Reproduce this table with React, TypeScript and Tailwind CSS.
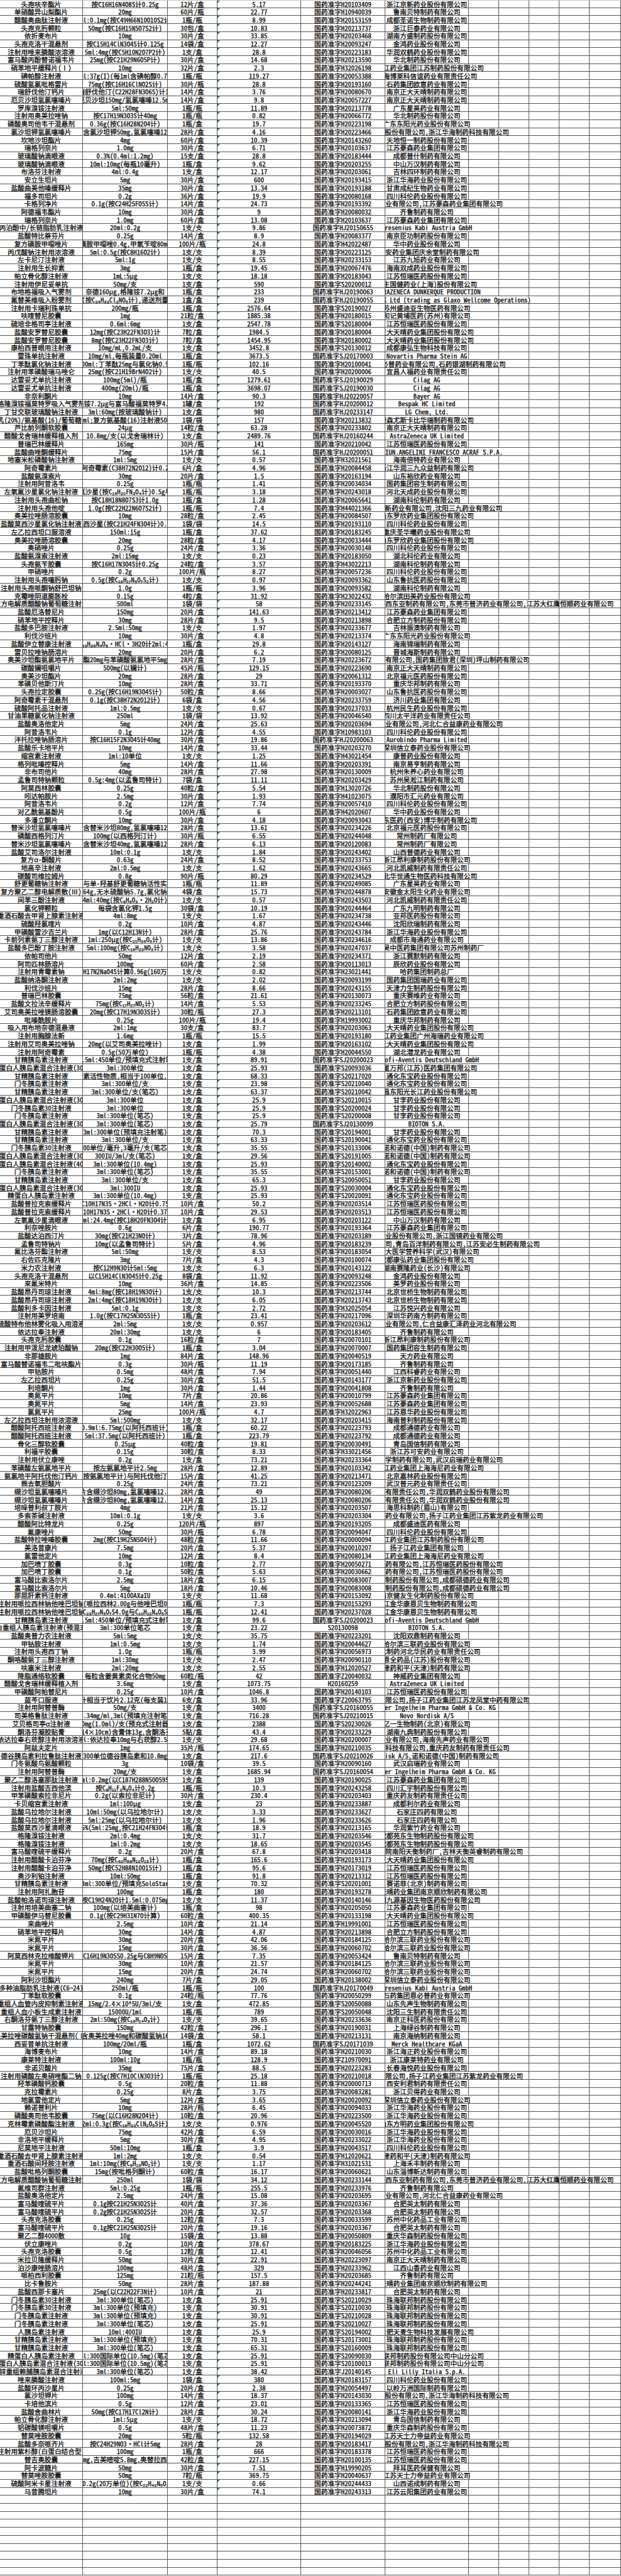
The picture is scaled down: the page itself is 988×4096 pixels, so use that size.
import clsx from "clsx";

// 药品目录表格（电子表格截图的还原）
const RAW = `头孢呋辛酯片|按C16H16N4O8S计0.25g|12片/盒|5.17|国药准字H20103409|浙江京新药业股份有限公司
单硝酸异山梨酯片|20mg|60片/瓶|22.77|国药准字H10940039|鲁南贝特制药有限公司
醋酸奥曲肽注射液|1ml:0.1mg(按C49H66N10O10S2计)|1瓶/瓶|8.99|国药准字H20153159|成都圣诺生物制药有限公司
头孢克肟颗粒|50mg(按C16H15N5O7S2计)|30包/盒|10.83|国药准字H20213737|浙江巨泰药业有限公司
依折麦布片|10mg|30片/盒|33.85|国药准字H20203468|湖南方盛制药股份有限公司
头孢克洛干混悬剂|按C15H14ClN3O4S计0.125g|14袋/盒|12.27|国药准字H20093247|金鸿药业股份有限公司
注射用唑来膦酸浓溶液|5ml:4mg(按C5H10N2O7P2计)|1支/盒|28.8|国药准字H20223183|华润双鹤药业股份有限公司
富马酸丙酚替诺福韦片|25mg(按C21H29N6O5P计)|30片/盒|14.68|国药准字H20213590|华北制药股份有限公司
硝苯地平缓释片(Ⅰ)|10mg|32片/盒|2.3|国药准字H32026198|扬子江药业集团江苏制药股份有限公司
碘帕醇注射液|100ml:37g(I)(每1ml含碘帕醇0.755g)|1瓶/瓶|119.27|国药准字H20053388|上海博莱科信谊药业有限责任公司
硫酸氢氯吡格雷片|75mg(按C16H16ClNO2S计)|30片/瓶|28.8|国药准字H20193160|石药集团欧意药业有限公司
瑞舒伐他汀钙片|按瑞舒伐他汀(C22H28FN3O6S)计10mg|14片/盒|3.76|国药准字H20080670|南京正大天晴制药有限公司
厄贝沙坦氢氯噻嗪片|厄贝沙坦150mg/氢氯噻嗪12.5mg|14片/盒|9.8|国药准字H20057227|南京正大天晴制药有限公司
罗库溴铵注射液|5ml:50mg|1瓶/瓶|11.89|国药准字H20213778|广东星昊药业有限公司
注射用奥美拉唑钠|按C17H19N3O3S计40mg|1瓶/瓶|0.82|国药准字H20066772|华北制药股份有限公司
磷酸奥司他韦干混悬剂|0.36g(按C16H28N2O4计)|1瓶/盒|19.7|国药准字H20223198|广东东阳光药业股份有限公司
氯沙坦钾氢氯噻嗪片|每片含氯沙坦钾50mg,氢氯噻嗪12.5mg|28片/盒|4.16|国药准字H20223466|浙江华海药业股份有限公司,浙江华海制药科技有限公司
坎地沙坦酯片|4mg|60片/盒|10.39|国药准字H20143260|天地恒一制药股份有限公司
瑞格列奈片|1.0mg|30片/盒|6.71|国药准字H20103637|江苏豪森药业集团有限公司
玻璃酸钠滴眼液|0.3%(0.4ml:1.2mg)|15支/盒|28.8|国药准字H20183444|成都普什制药有限公司
玻璃酸钠滴眼液|10ml:10mg(每瓶10毫升)|1瓶/盒|9.62|国药准字H20203255|中山万汉制药有限公司
布洛芬注射液|4ml:0.4g|1支/盒|12.17|国药准字H20203061|吉林四环制药有限公司
安立生坦片|5mg|30片/盒|600|国药准字H20193415|浙江华海药业股份有限公司
盐酸曲美他嗪缓释片|35mg|30片/盒|13.34|国药准字H20193188|甘肃成纪生物药业有限公司
福多司坦片|0.2g|36片/盒|19.9|国药准字H20080168|四川科伦药业股份有限公司
卡格列净片|0.1g(按C24H25FO5S计)|14片/盒|24.73|国药准字H20193392|<业有限公司,江苏豪森药业集团有限公司
阿德福韦酯片|10mg|30片/盒|9|国药准字H20080032|齐鲁制药有限公司
瑞格列奈片|1.0mg|60片/盒|13.08|国药准字H20103637|江苏豪森药业集团有限公司
丙泊酚中/长链脂肪乳注射液|20ml:0.2g|1支/支|9.86|国药准字HJ20150655|Fresenius Kabi Austria GmbH
盐酸特比萘芬片|0.25g|14片/盒|8.9|国药准字H20083377|南京臣功制药股份有限公司
复方磺胺甲噁唑片|磺胺甲噁唑0.4g,甲氧苄啶80mg|100片/瓶|24.8|国药准字H42022487|华中药业股份有限公司
丙戊酸钠注射用浓溶液|5ml:0.5g(按C8H16O2计)|1支/支|8.39|国药准字H20223125|<安药业集团庆余堂制药有限公司
左卡尼汀注射液|5ml:1g|1支/支|8.55|国药准字H20233153|江苏九旭药业有限公司
注射用生长抑素|3mg|1瓶/盒|19.45|国药准字H20067476|海南双成药业股份有限公司
帕立骨化醇注射液|1mL:5μg|1支/支|18.18|国药准字H20183043|江苏恒瑞医药股份有限公司
注射用伊尼妥单抗|50mg/支|1支/盒|590|国药准字S20200012|三生国健药业(上海)股份有限公司
布地格福吸入气雾剂|奈德160μg,格隆铵7.2μg和|1瓶/盒|233|国药准字HJ20190063|ASTRAZENECA DUNKERQUE PRODUCTION
氟替美维吸入粉雾剂|(按C₂₄H₃₃Cl₂NO₅计),递送剂量|1盒/盒|239|国药准字HJ20190055|Glaxo Operations UK Ltd (trading as Glaxo Wellcome Operations)
注射用卡瑞利珠单抗|200mg/瓶|1瓶/盒|2576.64|国药准字S20190027|苏州盛迪亚生物医药有限公司
呋喹替尼胶囊|1mg|21粒/盒|1885.38|国药准字H20180015|和记黄埔医药(苏州)有限公司
硫培非格司亭注射液|0.6ml:6mg|1支/盒|2547.78|国药准字S20180004|江苏恒瑞医药股份有限公司
盐酸安罗替尼胶囊|12mg(按C23H22FN3O3)计|7粒/盒|1984.5|国药准字H20180004|正大天晴药业集团股份有限公司
盐酸安罗替尼胶囊|8mg(按C23H22FN3O3计)|7粒/盒|1454.95|国药准字H20180002|正大天晴药业集团股份有限公司
康柏西普眼用注射液|10mg/mL,0.2mL/支|1支/盒|3452.8|国药准字S20130012|成都康弘生物科技有限公司
雷珠单抗注射液|10mg/ml,每瓶装量0.20ml|1瓶/盒|3673.5|国药准字SJ20170003|Novartis Pharma Stein AG
丁苯酞氯化钠注射液|100ml:丁苯酞25mg与氯化钠0.9g|1瓶/瓶|102.16|国药准字H20100041|石药集团恩必普药业有限公司,石药银湖制药有限公司
注射用苯磺酸瑞马唑仑|25mg(按C21H19BrN4O2计)|1支/支|40.5|国药准字H20200006|宜昌人福药业有限责任公司
达雷妥尤单抗注射液|100mg(5ml)/瓶|1瓶/盒|1279.61|国药准字SJ20190029|Cilag AG
达雷妥尤单抗注射液|400mg(20ml)/瓶|1瓶/盒|3698.07|国药准字SJ20190030|Cilag AG
非奈利酮片|10mg|14片/盒|90.3|国药准字HJ20220057|Bayer AG
格隆溴铵福莫特罗吸入气雾剂|格隆铵7.2μg与富马酸福莫特罗4.8μg|1罐/盒|192|国药准字HJ20200012|Bespak HC Limited
丁甘交联玻璃酸钠注射液|3ml:60mg(按玻璃酸钠计)|1支/盒|980|国药准字HJ20233147|LG Chem, Ltd.
乳(20%)/氨基酸(16)/葡萄糖(|250ml;复方氨基酸(16)注射液500ml|1袋/袋|157|国药准字H20213832|费森尤斯卡比华瑞制药有限公司
芦比前列酮软胶囊|24μg|14粒/盒|63.28|国药准字H20233802|南京正大天晴制药有限公司
醋酸戈舍瑞林缓释植入剂|10.8mg/支(以戈舍瑞林计)|1支/盒|2489.76|国药准字HJ20160244|AstraZeneca UK Limited
普瑞巴林缓释片|165mg|30片/瓶|141|国药准字H20210042|江苏恒瑞医药股份有限公司
盐酸曲唑酮缓释片|75mg|15片/盒|56.1|国药准字HJ20200051|<IUN.ANGELINI FRANCESCO ACRAF S.P.A.
地塞米松磷酸钠注射液|1ml:5mg|1支/支|0.57|国药准字H32021561|海南倍特药业有限公司
阿奇霉素片|按阿奇霉素(C38H72N2O12)计0.25g|6片/盒|4.96|国药准字H20084458|浙江华润三九众益制药有限公司
盐酸氨溴索片|30mg|20片/盒|1.5|国药准字H20163194|山东裕欣药业有限公司
注射用阿昔洛韦|0.25g|1瓶/瓶|1.41|国药准字H20034034|国药集团容生制药有限公司
左氧氟沙星氯化钠注射液|100ml:左氧氟沙星(按C₁₈H₂₀FN₃O₄计)0.5g与氯化钠0.9g|1瓶/瓶|3.18|国药准字H20243018|河北天成药业股份有限公司
注射用头孢曲松钠|按C18H18N8O7S3计1.0g|1瓶/盒|1.28|国药准字H20065641|湖南科伦制药有限公司
注射用头孢他啶|1.0g(按C22H22N6O7S2计)|1瓶/瓶|7.4|国药准字H44021366|深圳华润九新药业有限公司,沈阳三九药业有限公司
奥美拉唑肠溶胶囊|10mg|28粒/盒|2.45|国药准字H20084507|山东罗欣药业集团股份有限公司
盐酸莫西沙星氯化钠注射液|莫西沙星(按C21H24FN3O4计)0.4g|1袋/袋|14.5|国药准字H20193110|四川科伦药业股份有限公司
左乙拉西坦口服溶液|150ml:15g|1瓶/盒|37.62|国药准字H20183245|重庆圣华曦药业股份有限公司
奥美拉唑肠溶胶囊|20mg|28粒/盒|4.17|国药准字H20033444|山东罗欣药业集团股份有限公司
奥硝唑片|0.25g|24片/盒|3.36|国药准字H20030148|四川科伦药业股份有限公司
盐酸氨溴索注射液|2ml:15mg|1支/支|0.23|国药准字H20183050|湖北科伦药业有限公司
头孢氨苄胶囊|按C16H17N3O4S计0.25g|24粒/盒|3.57|国药准字H43022213|湖南科伦制药有限公司
甲硝唑片|0.2g|100片/瓶|8.27|国药准字H20057236|四川科伦药业股份有限公司
注射用头孢噻肟钠|0.5g(按C₁₆H₁₇N₅O₇S₂计)|1支/支|0.97|国药准字H20093362|山东鲁抗医药股份有限公司
注射用头孢哌酮钠舒巴坦钠|1.0g|1瓶/瓶|3.96|国药准字H20093582|湖南科伦制药有限公司
克霉唑阴道膨胀栓|0.15g|4粒/盒|31.92|国药准字H23022432|哈尔滨田美药业股份有限公司
复方电解质醋酸钠葡萄糖注射液|500ml|1袋/袋|58|国药准字H20233145|<西东亚制药有限公司,东莞市普济药业有限公司,江苏大红鹰恒顺药业有限公司
盐酸厄洛替尼片|150mg|20片/盒|141.63|国药准字H20213412|江苏豪森药业集团有限公司
硝苯地平控释片|30mg|28片/盒|9.5|国药准字H20213898|合肥立方制药股份有限公司
盐酸多巴胺注射液|2.5ml:50mg|1支/支|1.97|国药准字H20233677|吉林振澳制药有限公司
利伐沙班片|10mg|30片/盒|4.8|国药准字H20213374|广东东阳光药业股份有限公司
盐酸伊立替康注射液|按C₃₃H₃₈N₄O₆·HCl·3H2O计2ml:40mg|1瓶/盒|29.8|国药准字H20143127|海南锦瑞制药有限公司
雷贝拉唑钠肠溶片|20mg|20片/盒|6.2|国药准字H20080125|晋城海斯制药有限公司
奥美沙坦酯氨氯地平片|酯20mg与苯磺酸氨氯地平5mg|28片/盒|7.19|国药准字H20223672|<有限公司,国药集团致君(深圳)坪山制药有限公司
碳酸镧咀嚼片|500mg(以镧计)|45片/瓶|129.15|国药准字H20223690|南京正大天晴制药有限公司
奥美沙坦酯片|20mg|28片/盒|29|国药准字H20061312|北京福元医药股份有限公司
苯磺贝他斯汀片|10mg|28片/盒|33.71|国药准字H20193370|重庆华邦制药有限公司
头孢拉定胶囊|0.25g(按C16H19N3O4S计)|50粒/盒|8.66|国药准字H20003027|山东鲁抗医药股份有限公司
阿奇霉素干混悬剂|0.1g(按C38H72N2O12计)|6袋/盒|4.56|国药准字H20233759|济川药业集团有限公司
硫酸阿托品注射液|1ml:0.5mg|1支/支|0.67|国药准字H20237033|杭州民生药业股份有限公司
甘油果糖氯化钠注射液|250ml|1袋/袋|13.92|国药准字H20046540|四川太平洋药业有限责任公司
盐酸奥洛他定片|5mg|24片/盒|25.63|国药准字H20203694|<业有限公司,河北仁合益康药业有限公司
阿昔洛韦片|0.1g|12片/盒|4.55|国药准字H10983103|四川科伦药业股份有限公司
泮托拉唑钠肠溶片|按C16H15F2N3O4S计40mg|30片/盒|19.86|国药准字HJ20200063|Aurobindo Pharma Limited
盐酸乐卡地平片|10mg|14片/盒|33.44|国药准字H20203270|深圳信立泰药业股份有限公司
缩宫素注射液|1ml:10单位|1支/支|1.25|国药准字H43021454|康普药业股份有限公司
格列吡嗪控释片|5mg|14片/盒|11.66|国药准字H20203391|南京易亨制药有限公司
非布司他片|40mg|28片/盒|27.98|国药准字H20130009|杭州朱养心药业有限公司
孟鲁司特钠颗粒|0.5g:4mg(以孟鲁司特计)|7袋/盒|11.11|国药准字H20203429|苏州吴淞江制药有限公司
阿莫西林胶囊|0.25g|40粒/盒|5.54|国药准字H13020726|华北制药股份有限公司
吲达帕胺片|2.5mg|30片/盒|1.93|国药准字H41023075|濮阳市汇元药业有限公司
阿昔洛韦片|0.2g|12片/盒|7.74|国药准字H20057410|四川科伦药业股份有限公司
对乙酰氨基酚片|0.5g|100片/瓶|6|国药准字H42020607|华中药业股份有限公司
多潘立酮片|10mg|30片/盒|4.18|国药准字H20093043|华东医药(西安)博华制药有限公司
替米沙坦氢氯噻嗪片|每片含替米沙坦80mg,氢氯噻嗪12.5mg|28片/盒|13.61|国药准字H20234226|北京福元医药股份有限公司
磷酸西格列汀片|100mg(以西格列汀计)|30片/瓶|6.55|国药准字H20244048|常州制药厂有限公司
替米沙坦氢氯噻嗪片|每片含替米沙坦40mg,氢氯噻嗪12.5mg|28片/盒|6.13|国药准字H20120083|常州制药厂有限公司
盐酸艾司洛尔注射液|10ml:0.1g|1支/支|1.84|国药准字H20243402|山西普德药业有限公司
复方α-酮酸片|0.63g|24片/盒|8.52|国药准字H20233753|浙江昂利康制药股份有限公司
地高辛注射液|2ml:0.5mg|1支/支|1.62|国药准字H20243665|河北凯威制药有限责任公司
碳酸司维拉姆片|0.8g|90片/瓶|80.29|国药准字H20234529|湖北华世通生物医药科技有限公司
舒更葡糖钠注射液|与单-羟基舒更葡糖钠活性实|1瓶/瓶|11.89|国药准字H20249085|广东星昊药业有限公司
复方聚乙二醇电解质散(Ⅲ)|64g,无水硫酸钠5.7g,氯化钠|4袋/盒|15.73|国药准字H20244878|安徽金太阳生化药业有限公司
间苯三酚注射液|4ml:40mg(按C₆H₆O₃·2H₂O计)|1支/支|0.57|国药准字H20243503|河北凯威制药有限责任公司
氯化钾颗粒|每袋含氯化钾1.5g|30袋/盒|10.19|国药准字H20244464|广东九明制药有限公司
重酒石酸去甲肾上腺素注射液|4ml:8mg|1支/支|1.67|国药准字H20234738|亚邦医药股份有限公司
硫酸羟氯喹片|0.2g|10片/盒|4.87|国药准字H20243446|沈阳欣瑞制药有限公司
甲磺酸雷沙吉兰片|1mg(以C12H13N计)|28片/盒|25.76|国药准字H20243784|浙江华海药业股份有限公司
卡前列素氨丁三醇注射液|1ml:250μg(按C₂₁H₃₆O₅计)|1支/支|13.86|国药准字H20234616|成都市海通药业有限公司
盐酸多巴酚丁胺注射液|5ml:100mg(按C₁₈H₂₃NO₃计)|1支/支|3.58|国药准字H20247037|江苏吴中医药集团有限公司苏州制药厂
依帕司他片|50mg|12片/盒|2.19|国药准字H20234371|浙江赛默制药有限公司
阿司匹林肠溶片|100mg|60片/盒|2.58|国药准字H20113013|辰欣药业股份有限公司
注射用青霉素钠|按C16H17N2NaO4S计算0.96g(160万单位)|1支/支|0.82|国药准字H23021441|哈药集团制药总厂
盐酸纳洛酮注射液|2ml:2mg|1支/支|2.02|国药准字H20093199|国药集团国瑞药业有限公司
利伐沙班片|15mg|28片/盒|8.66|国药准字H20243155|天津力生制药股份有限公司
普瑞巴林胶囊|75mg|56粒/盒|21.61|国药准字H20130073|重庆赛维药业有限公司
盐酸文拉法辛缓释片|75mg(按C₁₇H₂₇NO₂计)|14片/盒|5.53|国药准字H20233245|合肥立方制药股份有限公司
艾司奥美拉唑镁肠溶胶囊|20mg(按C17H19N3O3S计)|30粒/瓶|27.3|国药准字H20213101|石药集团欧意药业有限公司
吡嗪酰胺片|0.25g|100片/瓶|19.4|国药准字H19993002|重庆华邦制药有限公司
吸入用布地奈德混悬液|2ml:1mg|30支/盒|83.7|国药准字H20203063|正大天晴药业集团股份有限公司
注射用胸腺法新|1.6mg|1瓶/瓶|15.5|国药准字H20193180|扬子江药业集团广州海瑞药业有限公司
注射用艾司奥美拉唑钠|20mg(以艾司奥美拉唑计)|1支/盒|1.99|国药准字H20163102|正大天晴药业集团股份有限公司
注射用阿奇霉素|0.5g(50万单位)|1瓶/瓶|4.38|国药准字H20044550|湖北潜龙药业有限公司
甘精胰岛素注射液|1.5ml:450单位/预填充式注射笔|1支/盒|89.91|国药准字SJ20200023|Sanofi-Aventis Deutschland GmbH
精蛋白人胰岛素混合注射液(30R)|3ml:300单位|1支/盒|25.93|国药准字S20093036|复星万邦(江苏)医药集团有限公司
甘精胰岛素注射液|素活性物质,相当于100单位,|1支/盒|68.33|国药准字S20217020|通化东宝药业股份有限公司
门冬胰岛素注射液|3ml:300单位/支|1支/盒|23.98|国药准字S20210040|通化东宝药业股份有限公司
甘精胰岛素注射液|3ml:300单位/支(笔芯)|1支/盒|63.37|国药准字S20210042|宜昌东阳光长江药业股份有限公司
精蛋白人胰岛素混合注射液(30R)|3ml:300单位|1支/盒|25.9|国药准字S20210015|甘李药业股份有限公司
门冬胰岛素30注射液|3ml:300单位|1支/盒|25.9|国药准字S20200024|甘李药业股份有限公司
门冬胰岛素注射液|3ml:300单位(笔芯)|1支/盒|25.9|国药准字S20200008|甘李药业股份有限公司
精蛋白人胰岛素混合注射液(30R)|3ml:300单位(笔芯)|1支/盒|25.79|国药准字SJ20130099|BIOTON S.A.
甘精胰岛素注射液|3ml:300单位(预填充注射笔)|1支/盒|70.3|国药准字S20194001|甘李药业股份有限公司
甘精胰岛素注射液|3ml:300单位/支|1支/盒|63.33|国药准字S20190041|通化东宝药业股份有限公司
门冬胰岛素30注射液|100单位/毫升,3毫升/支(笔芯)|1支/盒|35.55|国药准字S20133006|诺和诺德(中国)制药有限公司
精蛋白人胰岛素混合注射液(30R)|300IU/3ml/支(笔芯)|1支/盒|29.56|国药准字S20191005|诺和诺德(中国)制药有限公司
精蛋白人胰岛素混合注射液(40R)|3ml:300单位(10.4mg)|1支/盒|25.93|国药准字S20140002|通化东宝药业股份有限公司
门冬胰岛素注射液|3ml:300单位(笔芯)|1支/盒|35.55|国药准字S20153001|诺和诺德(中国)制药有限公司
甘精胰岛素注射液|3ml:300单位/支|1支/盒|65.3|国药准字S20050051|甘李药业股份有限公司
精蛋白人胰岛素混合注射液(30R)|3ml:300IU|1支/盒|25.93|国药准字S20030004|通化东宝药业股份有限公司
精蛋白人胰岛素注射液|3ml:300单位(10.4mg)|1支/盒|25.93|国药准字S20020091|通化东宝药业股份有限公司
盐酸普拉克索缓释片|按C10H17N3S·2HCl·H2O计0.75mg|10片/盒|50.2|国药准字H20203514|江苏恒瑞医药股份有限公司
盐酸普拉克索缓释片|按C10H17N3S·2HCl·H2O计0.375mg|10片/盒|29.53|国药准字H20203513|江苏恒瑞医药股份有限公司
左氧氟沙星滴眼液|5ml:24.4mg(按C18H20FN3O4计)|1支/盒|6.95|国药准字H20203122|中山万汉制药有限公司
利奈唑胺片|0.6g|6片/盒|190.77|国药准字H20193364|江苏豪森药业集团有限公司
盐酸达泊西汀片|30mg(按C21H23NO计)|3片/盒|78.96|国药准字H20203189|<业股份有限公司,浙江国镜药业有限公司
孟鲁司特钠片|10mg(以孟鲁司特计)|5片/盒|4.96|国药准字H20183239|<司,青岛百洋制药有限公司,江苏安必生制药有限公司
氟比洛芬酯注射液|5ml:50mg|1支/支|8.53|国药准字H20183054|<大医学营养科学(武汉)有限公司
右佐匹克隆片|3mg|7片/盒|4.3|国药准字H20100074|成都康弘药业集团股份有限公司
米力农注射液|按C12H9N3O计5ml:5mg|1支/支|6.3|国药准字H20143122|湖南赛隆药业(长沙)有限公司
头孢克洛干混悬剂|以C15H14ClN3O4S计0.25g|8袋/盒|11.92|国药准字H20093248|金鸿药业股份有限公司
来氟米特片|10mg|36片/盒|14.85|国药准字H20223506|美罗药业股份有限公司
盐酸昂丹司琼注射液|4ml:8mg(按C18H19N3O计)|1支/支|10.3|国药准字H20213744|北京世桥生物制药有限公司
盐酸昂丹司琼注射液|2ml:4mg(按C18H19N3O计)|1支/支|6.05|国药准字H20213743|北京世桥生物制药有限公司
盐酸利多卡因注射液|5ml:0.1g|1支/支|2.72|国药准字H32025054|江苏悦兴药业有限公司
注射用美罗培南|1.0g(按C17H25N3O5S计)|1瓶/盒|23.41|国药准字H20217096|深圳华药南方制药有限公司
硫酸特布他林雾化吸入用溶液|2ml:5mg|1支/支|0.957|国药准字H20203612|<业有限公司,仁合益康汇泽药业河北有限公司
依达拉奉注射液|20ml:30mg|1支/支|6|国药准字H20183405|齐鲁制药有限公司
头孢克肟胶囊|0.1g|16粒/盒|7|国药准字H20070101|浙江昂利康制药股份有限公司
注射用甲泼尼龙琥珀酸钠|20mg(按C22H30O5计)|1瓶/盒|3.04|国药准字H20070007|国药集团容生制药有限公司
非那雄胺片|1mg|84片/盒|148.96|国药准字H20040519|天方药业有限公司
富马酸替诺福韦二吡呋酯片|0.3g|30片/瓶|11.19|国药准字H20173185|齐鲁制药有限公司
甲钴胺片|0.5mg|48片/盒|7.94|国药准字H20051440|江西科睿药业有限公司
左乙拉西坦片|0.25g|30片/盒|51.5|国药准字H20143177|浙江京新药业股份有限公司
利培酮片|1mg|30片/盒|1.44|国药准字H20041808|齐鲁制药有限公司
奥氮平片|10mg|7片/盒|20.86|国药准字H20010799|江苏豪森药业集团有限公司
奥氮平片|5mg|14片/盒|23.93|国药准字H20052688|江苏豪森药业集团有限公司
氯氮平片|25mg|100片/瓶|4.7|国药准字H32022963|江苏恩华药业股份有限公司
左乙拉西坦注射用浓溶液|5ml:500mg|1支/支|32.17|国药准字H20203415|海南普利制药股份有限公司
醋酸阿托西班注射液|0.9ml:6.75mg(以阿托西班计)|1瓶/盒|60.22|国药准字H20223793|成都通德药业有限公司
醋酸阿托西班注射液|5ml:37.5mg(以阿托西班计)|1瓶/盒|223.79|国药准字H20223792|成都通德药业有限公司
骨化三醇软胶囊|0.25μg|40粒/盒|19.81|国药准字H20030491|青岛国信制药有限公司
利福平胶囊|0.15g|30粒/盒|8.33|国药准字H33021456|浙江苏可安药业有限公司
注射用伏立康唑|0.2g|1支/盒|73.21|国药准字H20233364|<学制药有限公司,武汉启瑞药业有限公司
苯磺酸左氨氯地平片|按左氨氯地平计2.5mg|28片/盒|12.89|国药准字H20103342|扬子江药业集团上海海尼药业有限公司
氨氯地平阿托伐他汀钙片|5mg(按氨氯地平计)与阿托伐他汀10mg|15片/盒|41.25|国药准字H20213471|北京嘉林药业股份有限公司
熊去氧胆酸片|0.25g|24片/盒|73.21|国药准字H20123209|武汉普元药业有限责任公司
缬沙坦氢氯噻嗪片|每片含缬沙坦80mg,氢氯噻嗪12.5mg|28片/盒|49|国药准字H20080206|<有限责任公司,华润双鹤药业股份有限公司
缬沙坦氢氯噻嗪片|每片含缬沙坦80mg,氢氯噻嗪12.5mg|14片/盒|25.13|国药准字H20080206|<有限责任公司,华润双鹤药业股份有限公司
培哚普利叔丁胺片|4mg|21片/盒|15.12|国药准字H20203507|海思科制药(眉山)有限公司
多索茶碱注射液|10ml:0.1g|1支/支|3.6|国药准字H20203304|<药业有限公司,扬子江药业集团江苏紫龙药业有限公司
醋酸阿比特龙片|0.25g|120片/瓶|897|国药准字H20193205|成都盛迪医药有限公司
氟康唑片|50mg|30片/瓶|6.78|国药准字H20094047|四川科伦药业股份有限公司
盐酸特拉唑嗪胶囊|2mg(按C19H25N5O4计)|48粒/盒|11.66|国药准字H20000094|扬子江药业集团江苏制药股份有限公司
美洛昔康片|7.5mg|20片/盒|5.37|国药准字H20010207|扬子江药业集团有限公司
氯雷他定片|10mg|12片/盒|8.4|国药准字H20080134|扬子江药业集团上海海尼药业有限公司
加巴喷丁胶囊|0.3g|10粒/盒|2.77|国药准字H20050271|<药有限公司,江苏恒瑞医药股份有限公司
加巴喷丁胶囊|0.1g|50粒/盒|5.63|国药准字H20030662|<药有限公司,江苏恒瑞医药股份有限公司
富马酸比索洛尔片|2.5mg|18片/盒|6.15|国药准字H20083007|<制药股份有限公司,成都硕德药业有限公司
富马酸比索洛尔片|5mg|18片/盒|10.46|国药准字H20083008|<制药股份有限公司,成都硕德药业有限公司
那屈肝素钙注射液|0.4ml:4100AXaIU|1支/支|11.68|国药准字H20153092|南京健友生化制药股份有限公司
注射用哌拉西林钠他唑巴坦钠|2.25g(哌拉西林2.00g与他唑巴坦0.25g)|1瓶/瓶|7.3|国药准字H20153293|浙江金华康恩贝生物制药有限公司
注射用哌拉西林钠他唑巴坦钠|4.5g(C₂₃H₂₇N₅O₇S4.0g与C₁₀H₁₂N₄O₅S0.5g)|1瓶/瓶|12.41|国药准字H20237028|浙江金华康恩贝生物制药有限公司
甘精胰岛素注射液|1.5ml:450单位/预填充式注射笔|1支/盒|99.6|国药准字SJ20200023|Sanofi-Aventis Deutschland GmbH
精蛋白重组人胰岛素注射液(预混30/70)|3ml:300单位笔芯|1支/盒|23.22|S20130098|BIOTON S.A.
盐酸奥普力农注射液|5ml:5mg|1支/支|35.75|国药准字H20223201|沈阳双鼎制药有限公司
甲钴胺注射液|1ml:0.5mg|1支/支|1.74|国药准字H20044627|哈尔滨三联药业股份有限公司
注射用头孢西丁钠|1.0g|1瓶/瓶|3.99|国药准字H20056973|华北制药河北华民药业有限责任公司
酮咯酸氨丁三醇注射液|1ml:30mg|1支/支|2.47|国药准字H20090110|恩全药品(江苏)股份有限公司
呋塞米注射液|2ml:20mg|1支/支|2.55|国药准字H12020527|津药和平(天津)制药有限公司
降脂通络软胶囊|每粒含姜黄素类化合物50mg|60粒/瓶|42|国药准字Z20040032|神威药业集团有限公司
醋酸戈舍瑞林缓释植入剂|3.6mg|1支/盒|1073.75|H20160259|AstraZeneca UK Limited
甲磺酸阿帕替尼片|0.25g|10片/盒|1046.8|国药准字H20140103|江苏恒瑞医药股份有限公司
蓝芩口服液|每1毫升相当于饮片2.12克(每支装10毫升)|6支/盒|33.96|国药准字Z20063795|<限公司,扬子江药业集团江苏龙凤堂中药有限公司
注射用阿替普酶|50mg/支|1支/盒|3400|国药准字SJ20160055|Boehringer Ingelheim Pharma GmbH & Co. KG
司美格鲁肽注射液|1.34mg/ml,3ml(预填充注射笔)|1支/盒|716.28|国药准字SJ20210015|Novo Nordisk A/S
艾贝格司亭α注射液|20mg(1.0ml)/支(预充式注射器)|1支/盒|2388|国药准字S20230026|亿一生物制药(北京)有限公司
酮洛芬凝胶贴膏|(14×10cm)含膏体13g,含酮洛芬|5贴/盒|43.4|国药准字H20233229|湖南九典制药股份有限公司
依达拉奉右莰醇注射用浓溶液|5ml:依达拉奉10mg与右莰醇2.5mg|1支/支|29.68|国药准字H20200007|<业有限公司,海南先声药业有限公司
阿兹夫定片|1mg|35片/瓶|174.65|国药准字H20210035|<科技有限公司,重庆药友制药有限责任公司
德谷胰岛素利拉鲁肽注射液|每支3ml:300单位德谷胰岛素和10.8mg利拉鲁肽|1支/盒|217.6|国药准字SJ20210026|Novo Nordisk A/S,诺和诺德(中国)制药有限公司
门冬氨酸鸟氨酸颗粒|3g|10袋/盒|39.5|国药准字H20090160|武汉启瑞药业有限公司
注射用阿替普酶|20mg/支|1支/盒|1685.94|国药准字SJ20160054|Boehringer Ingelheim Pharma GmbH & Co. KG
聚乙二醇洛塞那肽注射液|0.5ml:0.2mg(以C187H288N50O59S计)|1支/盒|139|国药准字H20190025|江苏豪森药业集团有限公司
注射用盐酸吉西他滨|按C₉H₁₁F₂N₃O₄计0.2g|1瓶/瓶|10.3|国药准字H20243258|四川汇宇制药股份有限公司
甲苯磺酸索拉非尼片|0.2g(以索拉非尼计)|30片/盒|230.4|国药准字H20203403|重庆药友制药有限责任公司
卡贝缩宫素注射液|1ml:100μg|1支/盒|23|国药准字H20233887|成都利尔药业有限公司
盐酸乌拉地尔注射液|10ml:50mg(以乌拉地尔计)|1支/支|3.33|国药准字H20233627|石家庄四药有限公司
盐酸乌拉地尔注射液|5ml:25mg(以乌拉地尔计)|1支/支|1.96|国药准字H20233626|石家庄四药有限公司
盐酸莫西沙星滴眼液|0.5%(5ml:25mg,按C21H24FN3O4计)|1瓶/盒|18.9|国药准字H20213165|华润紫竹药业有限公司
格隆溴铵注射液|2ml:0.4mg|1支/支|31.7|国药准字H20203546|成都苑东生物制药股份有限公司
格隆溴铵注射液|1ml:0.2mg|1支/支|18.65|国药准字H20203545|成都苑东生物制药股份有限公司
富马酸喹硫平缓释片|0.2g|20片/盒|67.8|国药准字H20203418|<院南阳天衡制药厂,吉林天衡英睿制药有限公司
注射用醋酸卡泊芬净|70mg(按C₅₂H₈₈N₁₀O₁₅计)|1瓶/盒|165.6|国药准字H20193173|正大天晴药业集团股份有限公司
注射用醋酸卡泊芬净|50mg(按C52H88N10O15计)|1瓶/盒|95.6|国药准字H20173019|江苏恒瑞医药股份有限公司
奥沙利铂注射液|10ml:50mg|1瓶/盒|91.8|国药准字H20213312|江苏恒瑞医药股份有限公司
甘精胰岛素注射液|3ml:300单位/预填充SoloStar|1支/盒|70.32|国药准字S20201001|赛诺菲(北京)制药有限公司
注射用阿扎胞苷|100mg|1瓶/盒|180|国药准字H20193278|正大天晴药业集团南京顺欣制药有限公司
盐酸帕洛诺司琼注射液|按C19H24N2O计1.5ml:0.075mg|1支/支|11.37|国药准字H20140146|杭州九源基因生物医药股份有限公司
注射用培美曲塞二钠|100mg(以培美曲塞计)|1瓶/盒|98|国药准字H20205050|江苏豪森药业集团有限公司
甲磺酸伊马替尼胶囊|0.1g(按C29H31N7O计算)|60粒/盒|400.35|国药准字H20133198|正大天晴药业集团股份有限公司
来曲唑片|2.5mg|10片/盒|21.14|国药准字H19991001|江苏恒瑞医药股份有限公司
硝苯地平控释片|30mg|14片/盒|4.87|国药准字H20213898|合肥立方制药股份有限公司
米氮平片|30mg|20片/盒|42.06|国药准字H20184125|哈尔滨三联药业股份有限公司
米氮平片|15mg|30片/盒|36.56|国药准字H20060702|哈尔滨三联药业股份有限公司
阿莫西林克拉维酸钾片|C16H19N3O5S0.25g与C8H9NO5|15片/盒|7.35|国药准字H20053424|鲁南贝特制药有限公司
米氮平片|30mg|10片/盒|21.57|国药准字H20184125|哈尔滨三联药业股份有限公司
米氮平片|15mg|20片/盒|24.74|国药准字H20060702|哈尔滨三联药业股份有限公司
阿利沙坦酯片|240mg|7片/盒|29.05|国药准字H20138002|深圳信立泰药业股份有限公司
多种油脂肪乳注射液(C6~24)|250ml/瓶|1瓶/瓶|100|国药准字HJ20170049|Fresenius Kabi Austria GmbH
丁苯酞软胶囊|0.1g|24粒/瓶|77.76|国药准字H20050299|石药集团恩必普药业有限公司
重组人血管内皮抑制素注射液|15mg/2.4×10^5U/3ml/支|1支/盒|472.85|国药准字S20050088|山东先声生物制药有限公司
重组人血小板生成素注射液|15000U/1ml|1瓶/瓶|789|国药准字S20050048|沈阳三生制药有限责任公司
右酮洛芬氨丁三醇注射液|2ml:50mg(按C₁₆H₁₄O₃计)|1支/支|39.65|国药准字H20233636|南京正科医药股份有限公司
甘露特钠胶囊|150mg|42粒/盒|296.1|国药准字H20190031|上海绿谷制药有限公司
奥美拉唑碳酸氢钠干混悬剂(Ⅰ)|每袋含奥美拉唑40mg和碳酸氢钠1680mg|14袋/盒|58.1|国药准字H20213131|南京海纳制药有限公司
西妥昔单抗注射液|100mg/20ml/瓶|1瓶/盒|1072.62|国药准字SJ20171039|Merck Healthcare KGaA
海博麦布片|10mg|14片/盒|89.18|国药准字H20210030|浙江海正药业股份有限公司
康莱特注射液|100ml:10g|1瓶/瓶|128.9|国药准字Z10970091|浙江康莱特药业有限公司
非诺贝酸片|35mg|75片/盒|88.5|国药准字H20223283|长春海悦药业股份有限公司
注射用磷酸左奥硝唑酯二钠|0.125g(按C7H10ClN3O3计)|1瓶/瓶|25.18|国药准字H20210018|<限公司,扬子江药业集团江苏紫龙药业有限公司
羟苯磺酸钙胶囊|0.5g|20粒/盒|11.88|国药准字H20000713|西安利君制药有限责任公司
克拉霉素片|0.25g|8片/盒|3.75|国药准字H20083281|浙江贝得药业有限公司
地氯雷他定片|5mg|12片/盒|3.65|国药准字H20020092|深圳信立泰药业股份有限公司
赖诺普利片|10mg|28片/瓶|6.45|国药准字H20094033|浙江华海药业股份有限公司
磷酸奥司他韦胶囊|75mg(以C16H28N2O4计)|10粒/盒|20.96|国药准字H20223500|浙江华海药业股份有限公司
克林霉素磷酸酯注射液|2ml:0.3g(按C₁₈H₃₃ClN₂O₅S计)|1支/支|0.976|国药准字H20045520|山东方明药业集团股份有限公司
厄贝沙坦片|75mg|42片/盒|6.59|国药准字H20030016|浙江华海药业股份有限公司
非洛地平缓释片|5mg|30片/盒|4.95|国药准字H20233022|浙江华海药业股份有限公司
尼莫地平注射液|50ml:10mg|1瓶/盒|3.9|国药准字H20043517|四川科伦药业股份有限公司
重酒石酸去甲肾上腺素注射液|1ml:2mg|1支/支|0.54|国药准字H12020621|津药和平(天津)制药有限公司
重酒石酸间羟胺注射液|1ml:10mg(按C₉H₁₃NO₂计)|1支/支|1.17|国药准字H31021531|上海禾丰制药有限公司
盐酸吡格列酮胶囊|15mg(按吡格列酮计)|60粒/盒|16.17|国药准字H20060621|山东淄博新达制药有限公司
复方电解质醋酸钠葡萄糖注射液|250ml|1袋/袋|34.12|国药准字H20233144|<西东亚制药有限公司,东莞市普济药业有限公司,江苏大红鹰恒顺药业有限公司
氟维司群注射液|5ml:0.25g|1瓶/瓶|255.5|国药准字H20233976|齐鲁制药有限公司
盐酸奥洛他定片|2.5mg|24片/盒|15.08|国药准字H20203695|<业有限公司,河北仁合益康药业有限公司
富马酸喹硫平片|0.1g按C21H25N3O2S计|40片/盒|37.36|国药准字H20203367|合肥英太制药有限公司
富马酸喹硫平片|0.2g按C21H25N3O2S计|20片/盒|32.57|国药准字H20203368|合肥英太制药有限公司
头孢克洛胶囊|0.25g|12粒/盒|7.3|国药准字H20033599|苏州中化药品工业有限公司
富马酸喹硫平片|0.1g按C21H25N3O2S计|20片/盒|19.16|国药准字H20203367|合肥英太制药有限公司
聚乙二醇4000散|10g|15袋/盒|13.88|国药准字H20050809|重庆华森制药股份有限公司
伏立康唑片|0.2g|10片/盒|378.67|国药准字H20183225|浙江华海药业股份有限公司
头孢克洛胶囊|0.5g|12粒/盒|12.41|国药准字H20046056|苏州中化药品工业有限公司
米拉贝隆缓释片|50mg|30片/盒|22.91|国药准字H20223097|南京正大天晴制药有限公司
泊沙康唑肠溶片|100mg|48片/盒|329|国药准字H20233962|江西山香药业有限公司
哌柏西利胶囊|125mg|21粒/瓶|157.5|国药准字H20203685|齐鲁制药有限公司
比卡鲁胺片|50mg|28片/盒|187.88|国药准字H20244241|正大天晴药业集团南京顺欣制药有限公司
盐酸西那卡塞片|25mg(以C22H22F3N计)|10片/盒|21|国药准字H20233817|合肥英太制药有限公司
门冬胰岛素30注射液|3ml:300单位(笔芯)|1支/盒|25.91|国药准字S20210029|珠海联邦制药股份有限公司
门冬胰岛素30注射液|3ml:300单位(预填充)|1支/盒|30.91|国药准字S20210030|珠海联邦制药股份有限公司
门冬胰岛素注射液|3ml:300单位(预填充)|1支/盒|30.91|国药准字S20210028|珠海联邦制药股份有限公司
门冬胰岛素注射液|3ml:300单位(笔芯)|1支/盒|25.91|国药准字S20210027|珠海联邦制药股份有限公司
人胰岛素注射液|10ml:400IU|1支/盒|25.9|国药准字S20194002|合肥天麦生物科技发展有限公司
甘精胰岛素注射液|3ml:300单位(预填充)|1支/盒|70.31|国药准字S20173001|珠海联邦制药股份有限公司
甘精胰岛素注射液|3ml:300单位(笔芯)|1支/盒|65.31|国药准字S20160009|珠海联邦制药股份有限公司
精蛋白人胰岛素注射液|3ml:300国际单位(10.5mg)(笔芯)|1支/盒|25.91|国药准字S20090030|珠海联邦制药股份有限公司中山分公司
精蛋白人胰岛素混合注射液(30R)|3ml:300国际单位(10.5mg)(笔芯)|1支/盒|25.91|国药准字S20100013|珠海联邦制药股份有限公司中山分公司
精蛋白锌重组赖脯胰岛素混合注射液(25R)|3ml:300单位(笔芯)|1支/盒|38.42|国药准字J20140145|Eli Lilly Italia S.p.A.
唑来膦酸注射液|100ml:5mg|1袋/盒|380|国药准字H20183157|四川科伦药业股份有限公司
盐酸环丙沙星片|0.25g|20片/盒|2.38|国药准字H20054497|以岭万洲国际制药有限公司
氯沙坦钾片|100mg|14片/盒|18.37|国药准字H20143030|浙江华海药业股份有限公司,浙江华海制药科技有限公司
卡培他滨片|0.5g|12片/盒|23.01|国药准字H20133365|江苏恒瑞医药股份有限公司
盐酸舍曲林片|50mg(按C17H17Cl2N计)|28片/盒|30.24|国药准字H20080141|浙江华海药业股份有限公司
帕立骨化醇注射液|1ml:5μg|1支/支|18.72|国药准字H20213094|青岛国信制药有限公司
铝碳酸镁咀嚼片|0.5g|48片/盒|11.23|国药准字H20073872|重庆华森制药股份有限公司
替莫唑胺胶囊|20mg|5粒/瓶|132.58|国药准字H20194029|江苏天士力帝益药业有限公司
盐酸多奈哌齐片|按C24H29NO3·HCl计5mg|28片/盒|28|国药准字H20183417|浙江华海药业股份有限公司,浙江华海制药科技有限公司
注射用紫杉醇(白蛋白结合型)|100mg|1瓶/盒|666|国药准字H20183378|江苏恒瑞医药股份有限公司
替吉奥胶囊|替加氟20mg,吉美嘧啶5.8mg,奥替拉西钾19.6mg|42粒/盒|227.15|国药准字H20100135|江苏恒瑞医药股份有限公司
阿卡波糖片|50mg|30片/盒|7.51|国药准字H19990205|拜耳医药保健有限公司
替莫唑胺胶囊|50mg|7粒/瓶|369.75|国药准字H20040637|江苏天士力帝益药业有限公司
硫酸阿米卡星注射液|2ml:0.2g(20万单位)(按C₂₂H₄₃N₅O₁₃计)|1支/支|0.66|国药准字H20244433|山西诺成制药有限公司
马昔腾坦片|10mg|30片/盒|74.1|国药准字H20243313|江苏云阳集团药业有限公司`;

type Row = { name: string; spec: string; pack: string; price: string; code: string; firm: string };

const rows: Row[] = RAW.split("\n").map((line) => {
  const [name, spec, pack, price, code, firm] = line.split("|");
  return { name, spec, pack, price, code, firm };
});

const EMPTY_ROWS = 10;
const EM = 10.7;

// rough advance width: half-width for Latin, full-width for CJK
function textWidth(s: string) {
  let w = 0;
  for (const ch of s) {
    const c = ch.codePointAt(0) ?? 0;
    if (c >= 0x2080 && c <= 0x209f) w += EM * 0.4;
    else w += c < 0x2000 ? EM / 2 : EM;
  }
  return w;
}

// right edges of the firm column and the empty columns after it
const EDGES = [746, 794, 842, 890, 938];

const cell = "flex shrink-0 items-center whitespace-nowrap pt-px leading-[10px]";

function SheetRow({ r, first }: { r?: Row; first?: boolean }) {
  const raw = r?.firm ?? "";
  const fromLeft = raw.startsWith("<");
  const firm = fromLeft ? raw.slice(1) : raw;
  const w = textWidth(firm);
  const end = fromLeft ? 613 + w : 679.5 + w / 2;
  const hide = EDGES.map((b) => firm !== "" && end > b + 0.5);
  const edge = (i: number) => (hide[i] ? "border-r border-transparent" : "border-r border-[#555]");

  return (
    <div className={clsx("flex h-[12.72px] shrink-0 border-b border-[#555]", first && "border-t border-t-[#c4c4c4]")}>
      <div className={clsx(cell, "w-[132px] justify-center overflow-x-clip border-r border-[#555]")}>{r?.name}</div>
      <div className={clsx(cell, "w-[135px] justify-center overflow-x-clip border-r border-[#555]")}>{r?.spec}</div>
      <div className={clsx(cell, "w-[79px] justify-center overflow-x-clip border-r border-[#555]")}>{r?.pack}</div>
      <div className={clsx(cell, "relative w-[133px] justify-center overflow-x-clip border-r border-[#555]")}>
        {r && <span className="absolute left-0 top-0 h-0 w-0 border-r-[4px] border-t-[4px] border-r-transparent border-t-[#16873c]" />}
        {r?.price}
      </div>
      <div className={clsx(cell, "relative z-10 w-[134px] justify-center overflow-x-clip border-r border-[#555] bg-white")}>{r?.code}</div>
      <div className={clsx(cell, "w-[133px]", fromLeft ? "justify-start" : "justify-center", edge(0))}>{firm}</div>
      <div className={clsx("w-[48px] shrink-0", edge(1))} />
      <div className={clsx("w-[48px] shrink-0", edge(2))} />
      <div className={clsx("w-[48px] shrink-0", edge(3))} />
      <div className={clsx("w-[48px] shrink-0", edge(4))} />
      <div className="w-[50px] shrink-0 border-r border-[#555]" />
    </div>
  );
}

export default function App() {
  return (
    <div className="flex h-[4096px] w-[988px] flex-col overflow-hidden bg-white font-['Noto_Sans_Mono_CJK_SC','Noto_Sans_CJK_SC',sans-serif] text-[10.7px] text-black [-webkit-text-stroke:0.25px_#000]">
      {rows.map((r, i) => (
        <SheetRow key={i} r={r} first={i === 0} />
      ))}
      {Array.from({ length: EMPTY_ROWS }, (_, i) => (
        <SheetRow key={`e${i}`} />
      ))}
    </div>
  );
}
